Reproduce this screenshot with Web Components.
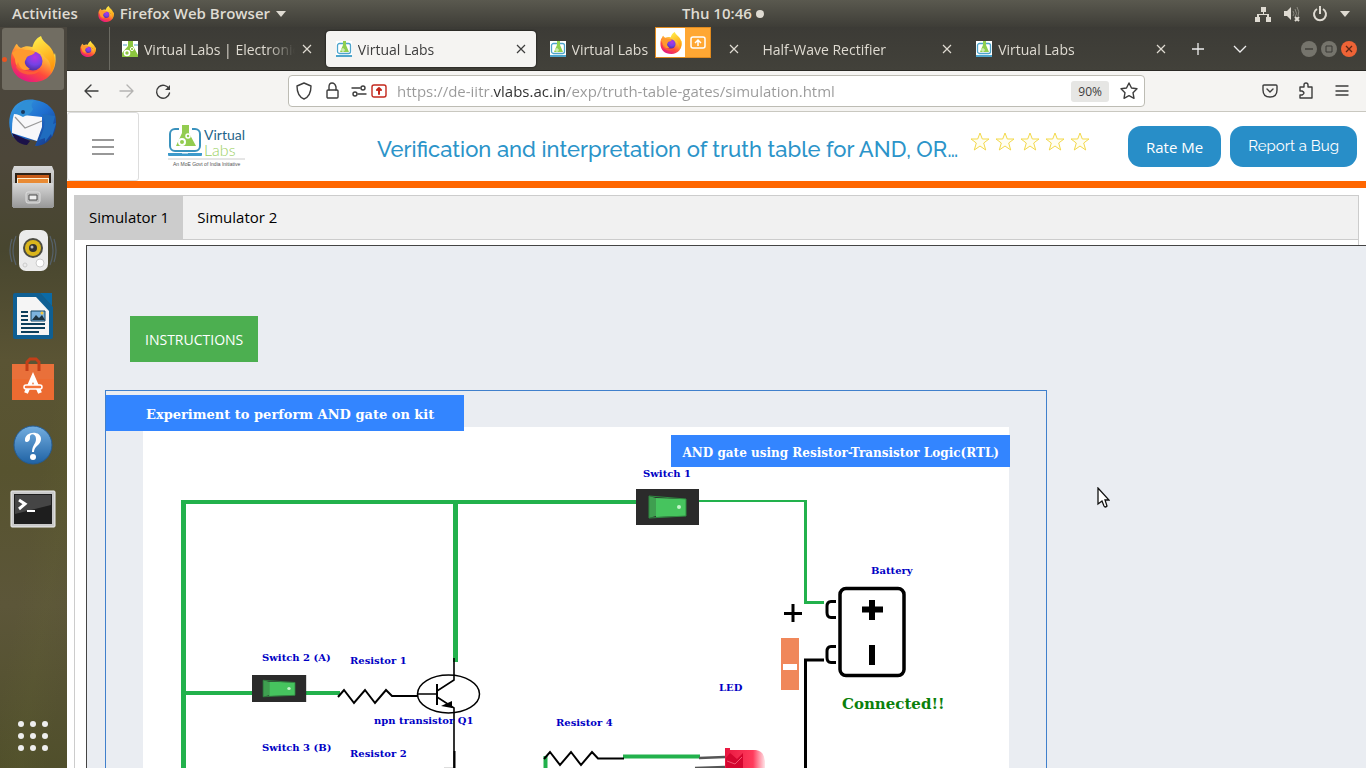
<!DOCTYPE html>
<html lang="en">
<head>
<meta charset="utf-8">
<title>Virtual Labs</title>
<style>
  html, body { margin: 0; height: 100%; }
  body { display: flex; flex-direction: column; overflow: hidden; font-family: "Open Sans", "Noto Sans", sans-serif; background: #fff; }
  main { display: flex; flex: 1; min-height: 0; }
</style>
</head>
<body>
<top-bar></top-bar>
<main>
  <app-dock></app-dock>
  <browser-window>
    <tab-strip slot="tabs">
      <browser-tab icon>Virtual Labs | Electronics<labs-icon slot="icon" flask></labs-icon></browser-tab>
      <browser-tab icon active>Virtual Labs<labs-icon slot="icon"></labs-icon></browser-tab>
      <browser-tab icon>Virtual Labs<labs-icon slot="icon"></labs-icon></browser-tab>
      <browser-tab>Half-Wave Rectifier</browser-tab>
      <browser-tab icon>Virtual Labs<labs-icon slot="icon"></labs-icon></browser-tab>
    </tab-strip>
    <nav-bar slot="nav"></nav-bar>
    <site-header></site-header>
    <simulator-tabs>
      <sim-frame><kit-board></kit-board></sim-frame>
    </simulator-tabs>
  </browser-window>
</main>
<mouse-pointer></mouse-pointer>

<script>
const define = (name, html) => {
  const template = document.createElement('template');
  template.innerHTML = html;
  customElements.define(name, class extends HTMLElement {
    constructor() {
      super();
      this.attachShadow({ mode: 'open' }).append(template.content.cloneNode(true));
    }
  });
};

define('mouse-pointer', `
<style>:host{display:block;position:absolute;left:1097px;top:487px;pointer-events:none} svg{display:block}</style>
<svg width="13" height="22" aria-hidden="true"><path d="M1 1v16l4-3 2 5q1 2 3 0l-2-6h4z" fill="#fff" stroke="#111" stroke-width="1.300"/></svg>`);

define('firefox-icon', `
<style>:host{display:block;width:16px;height:16px} svg{display:block;width:100%;height:100%}</style>
<svg viewBox="0 0 46 46" aria-hidden="true">
  <defs>
    <linearGradient id="a" x1=".85" y1=".1" x2=".3" y2="1"><stop offset="0" stop-color="#fff44f"/><stop offset=".35" stop-color="#ffa436"/><stop offset=".65" stop-color="#ff4a3c"/><stop offset="1" stop-color="#e31587"/></linearGradient>
    <radialGradient id="b" cx=".6" cy=".3" r=".8"><stop offset="0" stop-color="#b833e1"/><stop offset=".5" stop-color="#7542e5"/><stop offset="1" stop-color="#45288f"/></radialGradient>
    <linearGradient id="c" x1="0" y1="0" x2=".3" y2="1"><stop offset="0" stop-color="#fff44f"/><stop offset="1" stop-color="#ff980e"/></linearGradient>
  </defs>
  <path fill="url(#a)" d="M4 12c1-2 2-4 3-4 1 2 2 3 4 4 4-2 7-2 11-1l8 1c3 3 3 8 8 11 4-1 6-3 7-6 3 15-5 29-21 29C9 46 0 36 1 23c0-5 1-8 3-11z"/>
  <path fill="url(#c)" d="M31 0c1 4 4 6 7 9 8 7 9 19 3 28 0-4 0-9-3-13l-8-8c-5-3-8-3-8-3 1-6 4-11 9-13z"/>
  <circle cx="23" cy="25" r="9.500" fill="url(#b)"/>
  <path fill="#ff9a2e" d="M2 17c4-4 9-5 13-3 4 0 7 0 10 2-1 3-5 3-8 5l-2 4c-1 3 2 6 5 8-9 3-15-2-15-10z"/>
  <path fill="#ff6a2f" d="M8 26c2 9 12 12 22 8-5 7-20 6-24-3z" opacity=".7"/>
</svg>`);

define('labs-icon', `
<style>:host{display:block;width:16px;height:16px;background:#fff} svg{display:none;width:100%;height:100%} :host([flask]) .flask,:host(:not([flask])) .screen{display:block}</style>
<svg class="flask" viewBox="0 0 16 16" aria-hidden="true"><path d="M6 0h5v5l5 9v2H0v-4l6-7z" fill="#8cc63f"/><path d="M1 4h4M12 4h4" stroke="#4e9fc4"/><circle cx="5" cy="12" r="2.500" fill="none" stroke="#fff" stroke-width="1.600"/><circle cx="10" cy="8" r="1.600" fill="none" stroke="#fff"/></svg>
<svg class="screen" viewBox="0 0 16 16" aria-hidden="true"><rect x="1.500" y="2.500" width="13" height="10" rx="2" fill="#fff" stroke="#4ea5cc" stroke-width="1.300"/><path d="M7 0h3v4l3 7H4l3-7z" fill="#8fcf4f"/><circle cx="7" cy="9" r="1.200" fill="none" stroke="#fff" stroke-width=".8"/><path d="M0 14h16v2H0z" fill="#4ea5cc"/></svg>`);

define('top-bar', `
<style>
  :host{display:block;color:#dfdbd2;font-size:15px;font-weight:600;line-height:27px;background:linear-gradient(#5a594f,#3e3d37)}
  header{display:grid;grid-template-columns:8fr auto 7fr;padding:0 16px 0 12px}
  .left,.right{display:flex;align-items:center}
  .left{gap:20px}.right{justify-content:flex-end;gap:12px}
  button{all:unset;display:flex;align-items:center;gap:6px}
  .clock{gap:4px}
  svg{display:block;fill:#dfdbd2}
</style>
<header>
  <div class="left"><button>Activities</button>
    <button><firefox-icon></firefox-icon>Firefox Web Browser<svg width="10" height="6"><path d="M0 0h10L5 6z"/></svg></button></div>
  <button class="clock">Thu 10:46<svg width="8" height="8"><circle cx="4" cy="4" r="4"/></svg></button>
  <div class="right">
    <svg width="16" height="16"><path d="M6 1h5v5H9v2h5v3h2v5h-5v-5h1V9H4v2h1v5H0v-5h2V8h6V6H6z"/></svg>
    <svg width="17" height="16"><path d="M1 5h3l4-4v13l-4-4H1z"/><path d="M10 5q2 3 0 5M12 3q3 5 0 8M14 1q3 5 1 9" fill="none" stroke="#8a887f"/><path d="M12 11l4 4m0-4l-4 4" stroke="#dfdbd2" stroke-width="2"/></svg>
    <svg width="16" height="16"><path d="M5 3a6 6 0 1 0 6 0M8 0v8" fill="none" stroke="#dfdbd2" stroke-width="2"/></svg>
    <svg width="10" height="6"><path d="M0 0h10L5 6z"/></svg>
  </div>
</header>`);

define('app-dock', `
<style>
  :host{display:flex;flex-direction:column;justify-content:space-between;flex:none;width:67px;background:linear-gradient(100deg,#0000 60%,#6b70331a 75%,#0000 90%),linear-gradient(#4a463e 0,#4c4639 18%,#48462f 30%,#5a5434 45%,#57532f 60%,#5c5639 78%,#504f2b 100%)}
  nav{display:flex;flex-direction:column;gap:2px;padding:1px 3px 0 2px}
  button{all:unset;box-sizing:border-box;display:grid;place-items:center;height:62px;border-radius:3px;position:relative}
  .on{background:#716d62}
  .on::before{content:"";position:absolute;left:0;top:29px;width:5px;height:5px;border-radius:50%;background:#e95420}
  firefox-icon{width:46px;height:46px}
  svg{display:block}
  .apps{height:64px;margin-right:2px}
</style>
<nav aria-label="Dock">
  <button class="on" aria-label="Firefox"><firefox-icon></firefox-icon></button>
  <button aria-label="Thunderbird"><svg width="48" height="48">
    <defs><linearGradient id="t" x1="0" y1="0" x2="1" y2="1"><stop offset="0" stop-color="#3aa0e0"/><stop offset=".5" stop-color="#1f6fd0"/><stop offset="1" stop-color="#15307c"/></linearGradient></defs>
    <path d="M1 17C4 5 14-1 26 1c13 2 21 10 21 21 1 13-8 25-21 25l2-5-24-4C1 32-1 25 1 17z" fill="url(#t)"/>
    <path d="M3 34l18 8-3 4C11 46 5 41 3 34z" fill="#1b1148"/>
    <path d="M5 15l28 3v10l-5 14L3 34c0-7 0-13 2-19z" fill="#f7f7f9"/><path d="M6 18l10 11 17-7" fill="none" stroke="#999" stroke-width="1.200"/>
    <path d="M8 15C9 6 16 1 25 2c-3 2-3 5-1 8-2 5-6 6-10 8z" fill="#2f8fd6"/><circle cx="14" cy="13" r="2" fill="#173a60"/>
    <path d="M33 15c5 6 2 16-3 26l6-2v4l6-8 1 3 4-14-3 1 2-8z" fill="#1f6cbf"/></svg></button>
  <button aria-label="Files"><svg width="42" height="44">
    <defs><linearGradient id="f" x2="0" y2="1"><stop stop-color="#d8d8d8"/><stop offset="1" stop-color="#979797"/></linearGradient></defs>
    <path d="M2 1h38l2 5v36H0V6z" fill="url(#f)"/><path d="M3 8h36v12H3z" fill="#2c2218"/><path d="M5 10h32v10H5z" fill="#c75b18"/><path d="M5 13h32v7H5z" fill="#fff0d0"/><path d="M6 14h30v6H6z" fill="#e98b35"/><path d="M1 18h40v25H1z" fill="url(#f)"/>
    <rect x="14" y="27" width="14" height="11" rx="2" fill="#bbb" stroke="#dedede"/><path d="M17 30h8v5h-8z" fill="#eee" stroke="#4b4b4b"/></svg></button>
  <button aria-label="Rhythmbox"><svg width="50" height="44"><g fill="none" stroke="#56616a" stroke-width="1.200"><path d="M8 7q-6 14 0 29M4 10q-4 11 0 23M42 7q6 14 0 29M46 10q4 11 0 23"/></g>
    <rect x="11" y="1" width="29" height="41" rx="7" fill="#ebebeb"/><circle cx="25" cy="19" r="10" fill="#4b4b42"/><circle cx="25" cy="19" r="8" fill="#d9b51c"/><circle cx="25" cy="19" r="4" fill="#333"/><circle cx="24" cy="18" r="1.500" fill="#bbb"/><circle cx="17" cy="36" r="2" fill="none" stroke="#ccc"/><circle cx="32" cy="34" r="4" fill="#fff" stroke="#ccc"/></svg></button>
  <button aria-label="Writer"><svg width="42" height="50"><g transform="translate(0 2)"><path d="M3 1h25l13 14v30q0 2-2 2H3q-2 0-2-2V3q0-2 2-2z" fill="#0f5f93"/><path d="M28 1h12v13z" fill="#0b6aa6"/><path d="M5 5h19l13 14v24H5z" fill="#f5f5f5"/><path d="M9 20h7M9 24h7M9 28h7M9 32h24M9 36h24M9 40h18" stroke="#0c3f5c" stroke-width="2"/><path d="M19 19h14v10H19z" fill="#7db4dd" stroke="#174966"/><path d="M20 28l4-5 3 3 3-3 3 5z" fill="#1f3540"/><circle cx="30" cy="21" r="1.500" fill="#f4c63d"/></g></svg></button>
  <button aria-label="Software"><svg width="42" height="44"><path d="M0 7h42v36H0z" fill="#e9703a"/><path d="M0 22h42v21H0z" fill="#ec6b31"/><path d="M15 14V5l3-3h6l3 3v9" fill="none" stroke="#c33f18" stroke-width="3"/><path d="M14 36l7-16 7 16" fill="none" stroke="#fff" stroke-width="4"/><rect x="12" y="28" width="18" height="4" rx="2" fill="#f5743a" stroke="#fff" stroke-width="1.500"/></svg></button>
  <button aria-label="Help"><svg width="40" height="44"><defs><linearGradient id="h" x2="0" y2="1"><stop stop-color="#73aee0"/><stop offset="1" stop-color="#1f62a4"/></linearGradient></defs><circle cx="20" cy="24" r="19" fill="url(#h)" stroke="#235b93"/><path d="M12 20C11 10 28 9 28 18c0 6-7 7-7 13h-2c0-7 4-8 4-13 0-6-7-6-6-1 0 4-4 5-5 3z" fill="#fff"/><circle cx="20" cy="36" r="3" fill="#fff"/></svg></button>
  <button aria-label="Terminal"><svg width="46" height="42"><g transform="translate(0 4)"><rect x="1" y="1" width="44" height="36" rx="1" fill="#c9c9c9" stroke="#eee"/><path d="M4 4h38v30H4z" fill="#1e1e1e"/><path d="M5 5h36v10L5 24z" fill="#454545"/><path d="M9 10l6 4-6 5" fill="none" stroke="#fff" stroke-width="3"/><path d="M17 21h8" stroke="#fff" stroke-width="2"/></g></svg></button>
</nav>
<button class="apps" aria-label="Show Applications"><svg width="30" height="30" fill="#eee"><g id="r"><circle cx="3" cy="3" r="3"/><circle cx="15" cy="3" r="3"/><circle cx="27" cy="3" r="3"/></g><use href="#r" y="12"/><use href="#r" y="24"/></svg></button>`);

define('browser-window', `
<style>
  :host{display:flex;flex-direction:column;flex:1;min-width:0;background:#fff}
  .page{flex:1;min-height:0;overflow:hidden}
</style>
<slot name="tabs"></slot><slot name="nav"></slot><div class="page"><slot></slot></div>`);

define('tab-strip', `
<style>
  :host{display:flex;height:43px;background:linear-gradient(#3c3b36,#42413a);border-bottom:1px solid #2a2925;color:#dfdbd2;position:relative}
  .pin{display:grid;place-items:center;width:42px;border-right:1px solid #6b6a62}
  .tabs{display:flex;flex:1;min-width:0}
  .end{display:flex;align-items:center;width:188px;box-sizing:border-box;padding:0 9px 0 10px;justify-content:space-between}
  .win{display:flex;gap:4px;margin-left:30px}
  button{all:unset;display:block} svg{display:block}
  .share{position:absolute;left:588px;top:0;display:flex;width:56px;height:31px;box-sizing:border-box;border:1px solid #e08a1e;background:#ffa733}
  .share span{display:grid;place-items:center;background:#fff;width:29px}
  .share firefox-icon{width:22px;height:22px}
  .share svg{margin:auto}
</style>
<div class="pin"><firefox-icon></firefox-icon></div>
<div class="tabs"><slot></slot></div>
<div class="end">
  <button aria-label="New tab"><svg width="20" height="20"><path d="M10 4v12M4 10h12" stroke="#eee" stroke-width="1.300"/></svg></button>
  <button aria-label="List all tabs"><svg width="20" height="20"><path d="M4 7l6 6 6-6" fill="none" stroke="#eee" stroke-width="1.300"/></svg></button>
  <div class="win">
    <button aria-label="Minimize"><svg width="16" height="16"><circle cx="8" cy="8" r="8" fill="#75746c"/><path d="M4 8h8" stroke="#3a3934" stroke-width="1.300"/></svg></button>
    <button aria-label="Maximize"><svg width="16" height="16"><circle cx="8" cy="8" r="8" fill="#75746c"/><path d="M5 5h6v6H5z" fill="none" stroke="#3a3934"/></svg></button>
    <button aria-label="Close"><svg width="16" height="16"><circle cx="8" cy="8" r="8" fill="#ee6336"/><path d="M5 5l6 6m0-6l-6 6" stroke="#5c2716" stroke-width="1.300"/></svg></button>
  </div>
</div>
<div class="share"><span><firefox-icon></firefox-icon></span><svg width="16" height="14"><rect x="1" y="1" width="14" height="11" rx="2" fill="none" stroke="#fff" stroke-width="1.500"/><path d="M8 10V5M5 7l3-3 3 3" fill="none" stroke="#fff" stroke-width="1.500"/></svg></div>`);

define('browser-tab', `
<style>
  :host{display:flex;align-items:center;flex:1;min-width:0;box-sizing:border-box;margin:4px 2px 3px;padding:0 10px;gap:6px;border-radius:4px;font-size:14px;line-height:34px}
  :host([active]){background:#f5f4f2;color:#3d3d3d;box-shadow:0 0 2px #000}
  :host(:not([icon])){padding-left:9px}
  .label{flex:1;min-width:0;padding-top:2px;white-space:nowrap;overflow:hidden;-webkit-mask-image:linear-gradient(to left,transparent,#000 28px)}
  :host(:not([icon])) ::slotted(*){display:none}
  slot[name=icon]::slotted(*){flex:none}
  button{all:unset;flex:none;margin-right:-1px} svg{display:block;fill:none;stroke:currentColor;stroke-width:1.200}
</style>
<slot name="icon"></slot><div class="label"><slot></slot></div>
<button aria-label="Close tab"><svg width="12" height="12"><path d="M2 2l8 8m0-8l-8 8"/></svg></button>`);

define('nav-bar', `
<style>
  :host{display:flex;align-items:center;height:40px;border-bottom:1px solid #c9c8c0;background:#f5f4f2;color:#3d3d3d}
  .side{display:flex;gap:16px;box-sizing:border-box;width:221px;padding:0 14px}
  .side.r{justify-content:flex-end}
  button{all:unset;display:block} svg{display:block;fill:none;stroke:currentColor;stroke-width:1.400;stroke-linecap:round;stroke-linejoin:round}
  .dim{opacity:.35}
  .url{display:flex;align-items:center;flex:1;min-width:0;box-sizing:border-box;height:32px;border:1px solid #bdbcb4;border-radius:4px;background:#fff;padding:0 6px}
  .ids{display:flex;gap:8px}.ids .perm{margin-right:-4px}
  input{flex:1;min-width:0;border:0;outline:0;padding:0;margin-left:10px;height:28px;font:15px "Open Sans",sans-serif;background:linear-gradient(90deg,#999 96px,#2e2e2e 96px 168px,#999 168px);-webkit-background-clip:text;background-clip:text;-webkit-text-fill-color:transparent}
  .zoom{background:#e6e6e4;border-radius:3px;font-size:12px;line-height:21px;padding:0 7px;margin-right:11px}
</style>
<div class="side">
  <button aria-label="Back"><svg width="20" height="20"><path d="M17 10H4m6-6l-6 6 6 6"/></svg></button>
  <button aria-label="Forward" class="dim"><svg width="20" height="20"><path d="M3 10h13m-6-6l6 6-6 6"/></svg></button>
  <button aria-label="Reload"><svg width="20" height="20"><path d="M16 8a6.500 6.500 0 1 0 .500 4"/><path d="M17 4v5h-5z" fill="currentColor" stroke="none"/></svg></button>
</div>
<div class="url">
  <div class="ids">
    <svg width="20" height="20"><path d="M9 2l7 3c0 6-2 11-7 13-5-2-7-7-7-13z"/></svg>
    <svg width="20" height="20"><rect x="4" y="9" width="11" height="8" rx="1"/><path d="M6 9V6q0-4 3-4t4 4v3"/></svg>
    <svg class="perm" width="16" height="20"><path d="M1 7h8M7 13h8"/><circle cx="12" cy="7" r="2"/><circle cx="4" cy="13" r="2"/></svg>
    <svg width="16" height="20" style="color:#c3271c"><rect x="1" y="4" width="14" height="12" rx="2"/><path d="M8 13V8m-2 1l2-2 2 2" stroke-width="2"/></svg>
  </div>
  <input aria-label="Address" value="https://de-iitr.vlabs.ac.in/exp/truth-table-gates/simulation.html">
  <button class="zoom">90%</button>
  <button aria-label="Bookmark"><svg width="18" height="18"><path d="M9 1l2.500 5 5.500.700-4 4 1 5.600-5-2.600-5 2.600 1-5.600-4-4L6.500 6z"/></svg></button>
</div>
<div class="side r">
  <button aria-label="Pocket"><svg width="20" height="20"><path d="M4 4h12q1 0 1 1v4q0 7-7 7T3 9V5q0-1 1-1zM7 8l3 3 3-3"/></svg></button>
  <button aria-label="Extensions"><svg width="20" height="20"><path d="M4 8V6h4V4q0-2 2-2t2 2v2h4v11H4v-3h2q2-1 2-2t-2-2H4z"/></svg></button>
  <button aria-label="Menu"><svg width="20" height="20"><path d="M4 5h12M4 10h12M4 14h12"/></svg></button>
</div>`);

define('site-header', `
<style>
  :host{display:block;border-bottom:7px solid #ff6600}
  header{display:flex;height:69px}
  button{all:unset;display:block;box-sizing:border-box}
  .menu{display:grid;place-items:center;width:72px;border:1px solid #ddd;border-radius:3px}
  .logo{margin:12px 0 0 29px}
  h1{flex:1;min-width:0;margin:0 4px 0 129px;font:500 22px/74px "Raleway","Lato",sans-serif;color:#2c94c9;white-space:nowrap;overflow:hidden;text-overflow:ellipsis}
  fieldset{display:flex;gap:5px;border:0;padding:0;margin:20px 38px 0 0;min-width:0}
  input{appearance:none;margin:0;width:20px;height:20px;background:url("data:image/svg+xml,%3Csvg xmlns='http://www.w3.org/2000/svg' width='20' height='20'%3E%3Cpath d='M10 1l2.300 6H19l-5.300 4 2 7-5.700-4-5.700 4 2-7L1 7h6.700z' fill='%23fffef2' stroke='%23f3d94b'/%3E%3C/svg%3E")}
  .pill{margin:14px 9px 0 0;height:41px;padding:0 18px;border-radius:13px;background:#288ec8;color:#fff;font-size:15px;line-height:43px;white-space:nowrap}
  .bug{font-family:"Raleway","Lato",sans-serif;line-height:39px}
  svg{display:block}
</style>
<header>
  <button class="menu" aria-label="Menu"><svg width="22" height="18"><path d="M0 2h22M0 9h22M0 16h22" stroke="#777" stroke-width="1.500"/></svg></button>
  <a class="logo" href="#" aria-label="Virtual Labs home"><svg width="80" height="46">
    <rect x="2" y="5" width="30" height="22" rx="5" fill="#fff" stroke="#3a92bd" stroke-width="2"/>
    <path d="M11 5h13" stroke="#fff" stroke-width="3"/><path d="M14 1h7v8l7 13H8l6-13z" fill="#93cc50"/><circle cx="14" cy="18" r="3" fill="#93cc50" stroke="#fff" stroke-width="2"/><circle cx="20" cy="12" r="2" fill="none" stroke="#fff" stroke-width="1.500"/>
    <path d="M0 29h34v2q0 1-1 1H1q-1 0-1-1z" fill="#3d9acb"/><path d="M14 29h6" stroke="#fff"/>
    <text x="36" y="16" font-family="Lato" font-size="14" fill="#1f6489">Virtual</text>
    <text x="36" y="32" font-family="Lato" font-weight="300" font-size="16" fill="#9bd062">Labs</text>
    <path d="M0 35h77" stroke="#ccc"/><text x="5" y="42" font-family="Liberation Sans" font-size="5" fill="#555">An MoE Govt of India Initiative</text>
  </svg></a>
  <h1>Verification and interpretation of truth table for AND, OR…</h1>
  <fieldset aria-label="Rating"><input type="radio" name="r" aria-label="1 star"><input type="radio" name="r" aria-label="2 stars"><input type="radio" name="r" aria-label="3 stars"><input type="radio" name="r" aria-label="4 stars"><input type="radio" name="r" aria-label="5 stars"></fieldset>
  <button class="pill">Rate Me</button><button class="pill bug">Report a Bug</button>
</header>`);

define('simulator-tabs', `
<style>
  :host{display:block;padding:7px 7px 0}
  .bar{display:flex;border:1px solid #ccc;background:#f1f1f1}
  button{all:unset;padding:0 14px;font-size:15px;line-height:43px;color:#000}
  .on{background:#ccc}
  .body{border:1px solid #ccc;border-top:0;padding:5px 0 0 11px}
</style>
<div class="bar" role="tablist"><button class="on" role="tab">Simulator 1</button><button role="tab">Simulator 2</button></div>
<div class="body"><slot></slot></div>`);

define('sim-frame', `
<style>
  :host{display:block;margin-right:-40px;border:1px solid #444;background:#eaedf2;padding:70px 0 0 18px}
  button{all:unset;display:block;box-sizing:border-box;width:fit-content;height:46px;margin:0 0 28px 25px;padding:0 15px;background:#4caf50;color:#fff;font-size:14px;line-height:48px}
</style>
<button>INSTRUCTIONS</button><slot></slot>`);

define('kit-board', `
<style>
  :host{display:block;position:relative;width:fit-content;border:1px solid #4080cc;padding:4px 37px 40px 0;font-family:"DejaVu Serif",serif;font-weight:bold}
  h2,h3{margin:0;background:#3385ff;color:#fff;position:relative;white-space:nowrap}
  h2{width:fit-content;padding:4px 30px 0 40px;font-size:13px;line-height:32px}
  h3{position:absolute;right:36px;top:44px;padding:4px 11px 0 12px;font-size:12px;line-height:28px}
  svg{display:block;margin:-4px 0 0 37px;background:#fff}
  .l{fill:#0000c4;font-size:10px}
  .g{fill:none;stroke:#22b14c;stroke-width:4}
  .k{fill:none;stroke:#000;stroke-width:2}
</style>
<h2>Experiment to perform AND gate on kit</h2>
<svg width="866" height="400" viewBox="143 427 866 400" role="img" aria-label="AND gate circuit">
  <defs>
    <linearGradient id="led"><stop stop-color="#e8163f"/><stop offset=".7" stop-color="#ff3b5c"/><stop offset="1" stop-color="#ffe4e8"/></linearGradient>
    <g id="sw"><path d="M0 0h63v36H0z" fill="#2b2b2b"/><path d="M13 7l7 2v18l-7 2z" fill="#3f9f50"/><path d="M20 9l30 1v17l-30 1z" fill="#46c45e"/><path d="M13 7l37 3v17l-37 2z" fill="none" stroke="#2f8a41"/><circle cx="43" cy="18" r="2" fill="#c5f5cb"/></g>
  </defs>
  <path class="g" style="stroke-width:5" d="M183.500 827V502M455.500 502v160"/><path class="g" d="M181 502h455M184 693h68M306 693h34"/>
  <path class="g" style="stroke-width:2" d="M699 501h106"/><path class="g" style="stroke-width:3" d="M805.500 500v102.500H824"/>
  <use href="#sw" x="636" y="489"/><use href="#sw" transform="translate(252 675) scale(.86 .75)"/>
  <path d="M338 697l6-7 10 13 11-13 10 13 11-13 6 6h26" class="k"/>
  <ellipse cx="448.500" cy="694" rx="31" ry="19" class="k" style="stroke-width:1.500"/>
  <path class="k" d="M437 684v21"/><path class="k" d="M418 694h19M437 691l17-11v-22M437 697l17 11v60" style="stroke-width:1.600"/><path d="M441 706l11-5v7z"/><path class="k" d="M454.500 751v20"/><path d="M444 768h9" stroke="#bbb"/>
  <path class="g" d="M545.500 768v-12M623 756.500h77"/><path d="M544 759l6-7 10 13 11-13 10 13 11-13 6 6.500h26" class="k"/>
  <path d="M699 758l26-1M695 768l30-1" fill="none" stroke="#555" stroke-width="2.500"/><path d="M725 748h5v2h26q8 1 9 11v12h-40z" fill="url(#led)"/><path d="M730 753l7 6 6-6v17h-17v-12z" fill="#d4062f"/><path d="M727 761l8 3 7-7" fill="none" stroke="#f15672"/>
  <rect x="840" y="588.500" width="64" height="87" rx="6" fill="none" stroke="#000" stroke-width="3.500"/>
  <path d="M836 601.500h-5q-4 0-4 5v6q0 5 4 5h5M836 646.500h-5q-4 0-4 5v6q0 5 4 5h5" fill="none" stroke="#000" stroke-width="3"/>
  <path d="M872 600v20M862 609.500h21M872 645v20" fill="none" stroke="#000" stroke-width="6"/>
  <path d="M793 604v18M784 613.500h18" fill="none" stroke="#000" stroke-width="3"/><path d="M781 638h18v52h-18z" fill="#f0875a"/><path d="M783 664h14v6h-14z" fill="#fff"/>
  <path d="M824 660h-18.500V827" fill="none" stroke="#000" stroke-width="3"/>
  <g class="l">
    <text x="643" y="477">Switch 1</text><text x="871" y="574">Battery</text><text x="262" y="661">Switch 2 (A)</text><text x="350" y="664">Resistor 1</text><text x="374" y="724">npn transistor Q1</text><text x="262" y="751">Switch 3 (B)</text><text x="350" y="757">Resistor 2</text><text x="556" y="726">Resistor 4</text><text x="719" y="691">LED</text>
  </g>
  <text x="842" y="709" font-size="15" fill="#0b800b">Connected!!</text>
</svg>
<h3>AND gate using Resistor-Transistor Logic(RTL)</h3>`);
</script>
</body>
</html>
